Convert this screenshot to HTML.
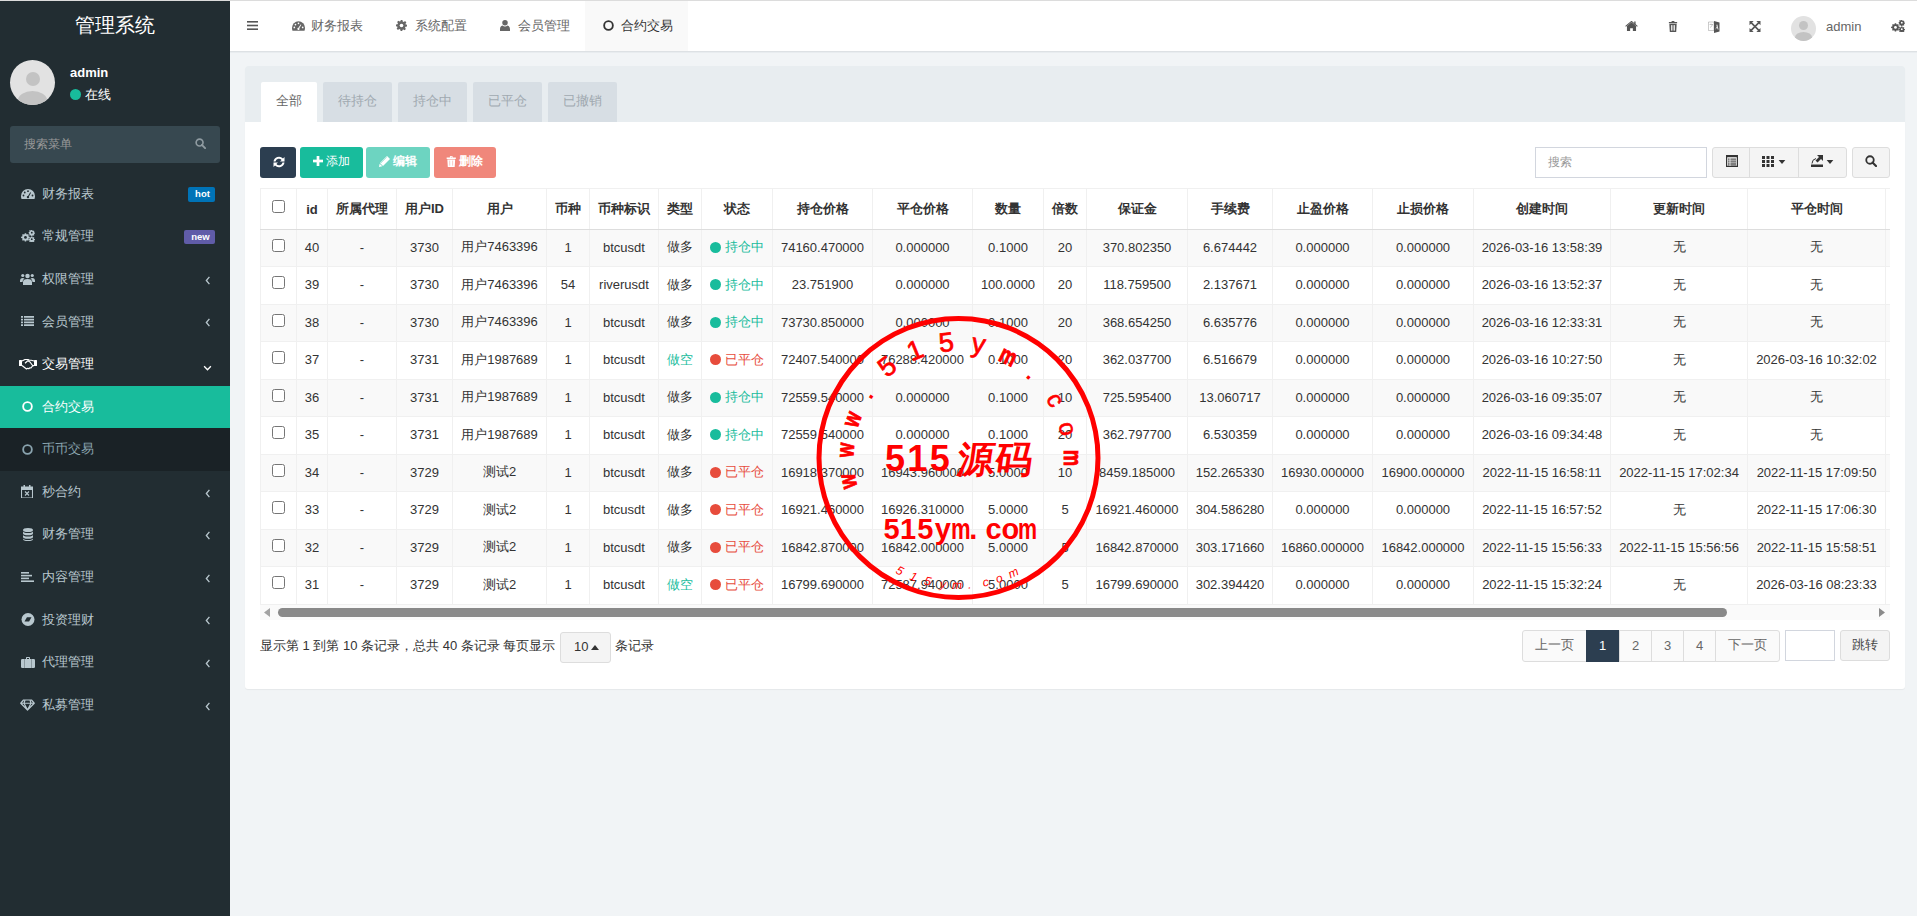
<!DOCTYPE html><html><head><meta charset="utf-8"><style>
*{box-sizing:border-box}
html,body{margin:0;padding:0;width:1917px;height:916px;overflow:hidden;background:#f1f4f6;font-family:"Liberation Sans",sans-serif;font-size:13px;color:#333;position:relative}
.a{position:absolute;white-space:nowrap}
.c{position:absolute;display:flex;align-items:center;justify-content:center;white-space:nowrap}
</style></head><body>
<div class="a" style="left:0;top:0;width:230px;height:916px;background:#222d32"></div>
<div class="a" style="left:0;top:0;width:1917px;height:1px;background:#dcdcdc;z-index:5"></div>
<div class="c" style="left:0;top:1px;width:230px;height:49px;color:#fff;font-size:20px">管理系统</div>
<div class="a" style="left:10px;top:60px;width:45px;height:45px;border-radius:50%;background:#e2e2e2;overflow:hidden"><div class="a" style="left:15.5px;top:11.5px;width:14px;height:14px;border-radius:50%;background:#c3c3c3"></div><div class="a" style="left:8px;top:31px;width:29px;height:18px;border-radius:50%;background:#c3c3c3"></div></div>
<div class="a" style="left:70px;top:65px;color:#fff;font-weight:bold;font-size:13px;line-height:16px">admin</div>
<div class="a" style="left:70px;top:89px;width:11px;height:11px;border-radius:50%;background:#18bc9c"></div>
<div class="a" style="left:85px;top:87px;color:#fff;font-size:13px;line-height:16px">在线</div>
<div class="a" style="left:10px;top:126px;width:210px;height:37px;background:#374850;border-radius:3px"></div>
<div class="a" style="left:24px;top:137px;color:#999;font-size:12px;line-height:14px">搜索菜单</div>
<svg style="position:absolute;left:195px;top:138px" width="11" height="11" viewBox="0 0 24 24" fill="#8f9ba1"><circle cx="10" cy="10" r="7.5" fill="none" stroke="#8f9ba1" stroke-width="3.6"/><path d="M15 15l7 7" stroke="#8f9ba1" stroke-width="4.2" stroke-linecap="round"/></svg>
<div class="a" style="left:42px;top:184.79px;line-height:18px;color:#b8c7ce">财务报表</div>
<svg style="position:absolute;left:21px;top:189px" width="14" height="10" viewBox="0 0 28 20" fill="#b8c7ce"><path d="M14 0A14 14 0 0 0 0 14q0 3 1 6h26q1-3 1-6A14 14 0 0 0 14 0z"/><circle cx="5" cy="13" r="1.8" fill="#222d32"/><circle cx="7.5" cy="7" r="1.8" fill="#222d32"/><circle cx="14" cy="4.3" r="1.8" fill="#222d32"/><circle cx="23" cy="13" r="1.8" fill="#222d32"/><path d="M18.5 6.5l1.6 1L15.8 15a2.3 2.3 0 1 1-1.8-1z" fill="#222d32"/></svg>
<div class="c" style="left:188px;top:187px;width:27px;height:15px;background:#0073b7;border-radius:2px;color:#fff;font-weight:bold;font-size:9.5px;padding:0 0 2px 2px">hot</div>
<div class="a" style="left:42px;top:227.36px;line-height:18px;color:#b8c7ce">常规管理</div>
<svg style="position:absolute;left:21px;top:230px" width="14" height="12" viewBox="0 0 30 26" fill="#b8c7ce"><path d="M8 7h3l.5 2 1.6.7 1.8-1.1 2 2-1.1 1.8.7 1.6 2 .5v3l-2 .5-.7 1.6 1.1 1.8-2 2-1.8-1.1-1.6.7L11 25H8l-.5-2-1.6-.7-1.8 1.1-2-2 1.1-1.8-.7-1.6L0 17.5v-3l2.5-.5.7-1.6-1.1-1.8 2-2 1.8 1.1L7.5 9z"/><circle cx="9.5" cy="16" r="3" fill="#222d32"/><path d="M22 0h2.4l.3 1.5 1.2.5 1.3-.9 1.7 1.7-.9 1.3.5 1.2 1.5.3v2.4l-1.5.3-.5 1.2.9 1.3-1.7 1.7-1.3-.9-1.2.5-.3 1.5H22l-.3-1.5-1.2-.5-1.3.9-1.7-1.7.9-1.3-.5-1.2L16.5 7V4.6l1.5-.3.5-1.2-.9-1.3 1.7-1.7 1.3.9 1.2-.5z"/><circle cx="23.2" cy="5.8" r="2" fill="#222d32"/><path d="M22 14h2.4l.3 1.5 1.2.5 1.3-.9 1.7 1.7-.9 1.3.5 1.2 1.5.3v2.4l-1.5.3-.5 1.2.9 1.3-1.7 1.7-1.3-.9-1.2.5-.3 1.5H22l-.3-1.5-1.2-.5-1.3.9-1.7-1.7.9-1.3-.5-1.2-1.5-.3v-2.4l1.5-.3.5-1.2-.9-1.3 1.7-1.7 1.3.9 1.2-.5z"/><circle cx="23.2" cy="19.8" r="2" fill="#222d32"/></svg>
<div class="c" style="left:184px;top:230px;width:31px;height:14px;background:#605ca8;border-radius:2px;color:#fff;font-weight:bold;font-size:9.5px;padding:0 0 1px 2px">new</div>
<div class="a" style="left:42px;top:269.93px;line-height:18px;color:#b8c7ce">权限管理</div>
<svg style="position:absolute;left:20px;top:273px" width="15" height="12" viewBox="0 0 30 24" fill="#b8c7ce"><circle cx="15" cy="6" r="4.5"/><circle cx="5.5" cy="5" r="3.2"/><circle cx="24.5" cy="5" r="3.2"/><path d="M6 24v-6q0-6 9-6t9 6v6z"/><path d="M0 16q0-6 5.5-6 2 0 3.5 1-4 2-4 7H0z"/><path d="M30 16q0-6-5.5-6-2 0-3.5 1 4 2 4 7h5z"/></svg>
<svg style="position:absolute;left:205px;top:276px" width="5.5" height="9" viewBox="0 0 10 16" fill="#b8c7ce"><path d="M8 1.5L2.5 8l5.5 6.5" fill="none" stroke="#b8c7ce" stroke-width="2.4"/></svg>
<div class="a" style="left:42px;top:312.50px;line-height:18px;color:#b8c7ce">会员管理</div>
<svg style="position:absolute;left:21px;top:316px" width="13" height="10" viewBox="0 0 26 20" fill="#b8c7ce"><rect x="0" y="0" width="4" height="3.5"/><rect x="6" y="0" width="20" height="3.5"/><rect x="0" y="5.5" width="4" height="3.5"/><rect x="6" y="5.5" width="20" height="3.5"/><rect x="0" y="11" width="4" height="3.5"/><rect x="6" y="11" width="20" height="3.5"/><rect x="0" y="16.5" width="4" height="3.5"/><rect x="6" y="16.5" width="20" height="3.5"/></svg>
<svg style="position:absolute;left:205px;top:318px" width="5.5" height="9" viewBox="0 0 10 16" fill="#b8c7ce"><path d="M8 1.5L2.5 8l5.5 6.5" fill="none" stroke="#b8c7ce" stroke-width="2.4"/></svg>
<div class="a" style="left:42px;top:355.07px;line-height:18px;color:#fff">交易管理</div>
<svg style="position:absolute;left:19px;top:358px" width="18" height="12" viewBox="0 0 36 24" fill="#fff"><rect x="0" y="4" width="6" height="12" rx="1"/><rect x="30" y="4" width="6" height="12" rx="1"/><path fill="none" stroke="#fff" stroke-width="2.4" stroke-linejoin="round" d="M6 6l6-3h6l3 1.5h3.5L30 6M6 15l9 7 2.5-1.5 2 1 2.5-2 2 .5 2.5-3.5L30 15M12 10.5l5.5-5 4.5 2.5 6 8"/></svg>
<svg style="position:absolute;left:203px;top:365px" width="9" height="6" viewBox="0 0 16 10" fill="#fff"><path d="M2 2l6 6 6-6" fill="none" stroke="#fff" stroke-width="2.4"/></svg>
<div class="a" style="left:0;top:385.86px;width:230px;height:42.57px;background:#18bc9c"></div>
<div class="a" style="left:42px;top:397.64px;line-height:18px;color:#fff">合约交易</div>
<svg style="position:absolute;left:22px;top:401px" width="11" height="11" viewBox="0 0 24 24" fill="#fff"><circle cx="12" cy="12" r="9.5" fill="none" stroke="#fff" stroke-width="4"/></svg>
<div class="a" style="left:0;top:428.43px;width:230px;height:42.57px;background:#1a2226"></div>
<div class="a" style="left:42px;top:440.21px;line-height:18px;color:#8aa4af">币币交易</div>
<svg style="position:absolute;left:22px;top:444px" width="11" height="11" viewBox="0 0 24 24" fill="#8aa4af"><circle cx="12" cy="12" r="9.5" fill="none" stroke="#8aa4af" stroke-width="4"/></svg>
<div class="a" style="left:42px;top:482.78px;line-height:18px;color:#b8c7ce">秒合约</div>
<svg style="position:absolute;left:21px;top:485px" width="12" height="13" viewBox="0 0 24 26" fill="#b8c7ce"><path d="M1 4h22v22H1z" fill="none" stroke="#b8c7ce" stroke-width="2.2"/><rect x="1" y="4" width="22" height="6"/><rect x="5" y="0" width="3" height="6"/><rect x="16" y="0" width="3" height="6"/><path d="M8 13l8 8M16 13l-8 8" stroke="#b8c7ce" stroke-width="2.2"/></svg>
<svg style="position:absolute;left:205px;top:489px" width="5.5" height="9" viewBox="0 0 10 16" fill="#b8c7ce"><path d="M8 1.5L2.5 8l5.5 6.5" fill="none" stroke="#b8c7ce" stroke-width="2.4"/></svg>
<div class="a" style="left:42px;top:525.35px;line-height:18px;color:#b8c7ce">财务管理</div>
<svg style="position:absolute;left:22px;top:528px" width="12" height="13" viewBox="0 0 20 26" fill="#b8c7ce"><ellipse cx="10" cy="4" rx="10" ry="4"/><path d="M0 6.5q0 3.5 10 3.5t10-3.5V11q0 3.5-10 3.5T0 11z"/><path d="M0 13.5q0 3.5 10 3.5t10-3.5V18q0 3.5-10 3.5T0 18z"/><path d="M0 20.5q0 3.5 10 3.5t10-3.5V22q0 4-10 4T0 22z"/></svg>
<svg style="position:absolute;left:205px;top:531px" width="5.5" height="9" viewBox="0 0 10 16" fill="#b8c7ce"><path d="M8 1.5L2.5 8l5.5 6.5" fill="none" stroke="#b8c7ce" stroke-width="2.4"/></svg>
<div class="a" style="left:42px;top:567.92px;line-height:18px;color:#b8c7ce">内容管理</div>
<svg style="position:absolute;left:21px;top:572px" width="13" height="10" viewBox="0 0 26 20" fill="#b8c7ce"><rect x="0" y="0" width="16" height="3.2"/><rect x="0" y="5.6" width="22" height="3.2"/><rect x="0" y="11.2" width="16" height="3.2"/><rect x="0" y="16.8" width="26" height="3.2"/></svg>
<svg style="position:absolute;left:205px;top:574px" width="5.5" height="9" viewBox="0 0 10 16" fill="#b8c7ce"><path d="M8 1.5L2.5 8l5.5 6.5" fill="none" stroke="#b8c7ce" stroke-width="2.4"/></svg>
<div class="a" style="left:42px;top:610.50px;line-height:18px;color:#b8c7ce">投资理财</div>
<svg style="position:absolute;left:21px;top:613px" width="14" height="13" viewBox="0 0 24 24" fill="#b8c7ce"><circle cx="12" cy="12" r="12"/><path d="M5.5 15.5L10 8h8.5L14 15.5z" fill="#222d32"/></svg>
<svg style="position:absolute;left:205px;top:616px" width="5.5" height="9" viewBox="0 0 10 16" fill="#b8c7ce"><path d="M8 1.5L2.5 8l5.5 6.5" fill="none" stroke="#b8c7ce" stroke-width="2.4"/></svg>
<div class="a" style="left:42px;top:653.07px;line-height:18px;color:#b8c7ce">代理管理</div>
<svg style="position:absolute;left:21px;top:657px" width="14" height="11" viewBox="0 0 28 22" fill="#b8c7ce"><path d="M10 4V1.5Q10 0 11.5 0h5Q18 0 18 1.5V4h-2V2h-4v2z"/><rect x="0" y="4" width="28" height="18" rx="2.5"/><rect x="6.5" y="4" width="1.2" height="18" fill="#222d32" opacity=".5"/><rect x="20.3" y="4" width="1.2" height="18" fill="#222d32" opacity=".5"/></svg>
<svg style="position:absolute;left:205px;top:659px" width="5.5" height="9" viewBox="0 0 10 16" fill="#b8c7ce"><path d="M8 1.5L2.5 8l5.5 6.5" fill="none" stroke="#b8c7ce" stroke-width="2.4"/></svg>
<div class="a" style="left:42px;top:695.64px;line-height:18px;color:#b8c7ce">私募管理</div>
<svg style="position:absolute;left:20px;top:699px" width="15" height="12" viewBox="0 0 30 23" fill="#b8c7ce"><path fill="none" stroke="#b8c7ce" stroke-width="2.4" stroke-linejoin="round" d="M7 1.5h16l5.5 6.5L15 21.5 1.5 8zM1.5 8h27M10 1.5L8 8l7 13.5L22 8l-2-6.5"/></svg>
<svg style="position:absolute;left:205px;top:702px" width="5.5" height="9" viewBox="0 0 10 16" fill="#b8c7ce"><path d="M8 1.5L2.5 8l5.5 6.5" fill="none" stroke="#b8c7ce" stroke-width="2.4"/></svg>
<div class="a" style="left:230px;top:1px;width:1687px;height:51px;background:#fff;border-bottom:1px solid #dde1e4"></div>
<div class="a" style="left:230px;top:52px;width:1687px;height:1px;background:#e8ecef"></div>
<svg style="position:absolute;left:247px;top:21px" width="11" height="9" viewBox="0 0 22 18" fill="#555"><rect x="0" y="0" width="22" height="3.2"/><rect x="0" y="7.4" width="22" height="3.2"/><rect x="0" y="14.8" width="22" height="3.2"/></svg>
<div class="a" style="left:585px;top:1px;width:103px;height:50px;background:#f9f9f9"></div>
<svg style="position:absolute;left:292px;top:21px" width="13" height="10" viewBox="0 0 28 20" fill="#666"><path d="M14 0A14 14 0 0 0 0 14q0 3 1 6h26q1-3 1-6A14 14 0 0 0 14 0z"/><circle cx="5" cy="13" r="1.8" fill="#fff"/><circle cx="7.5" cy="7" r="1.8" fill="#fff"/><circle cx="14" cy="4.3" r="1.8" fill="#fff"/><circle cx="23" cy="13" r="1.8" fill="#fff"/><path d="M18.5 6.5l1.6 1L15.8 15a2.3 2.3 0 1 1-1.8-1z" fill="#fff"/></svg>
<div class="a" style="left:311px;top:17px;line-height:18px;color:#666">财务报表</div>
<svg style="position:absolute;left:396px;top:20px" width="11" height="11" viewBox="0 0 24 24" fill="#666"><path d="M10 0h4l.7 3.3 2.3 1 2.8-1.9 2.8 2.8-1.9 2.8 1 2.3L24 10v4l-3.3.7-1 2.3 1.9 2.8-2.8 2.8-2.8-1.9-2.3 1L14 24h-4l-.7-3.3-2.3-1-2.8 1.9-2.8-2.8 1.9-2.8-1-2.3L0 14v-4l3.3-.7 1-2.3L2.4 4.2l2.8-2.8L8 3.3l2.3-1z"/><circle cx="12" cy="12" r="4" fill="#fff"/></svg>
<div class="a" style="left:415px;top:17px;line-height:18px;color:#666">系统配置</div>
<svg style="position:absolute;left:500px;top:20px" width="10" height="11" viewBox="0 0 20 22" fill="#666"><circle cx="10" cy="5.5" r="5.5"/><path d="M0 22v-4q0-6 5-7 2 2 5 2t5-2q5 1 5 7v4z"/></svg>
<div class="a" style="left:518px;top:17px;line-height:18px;color:#666">会员管理</div>
<svg style="position:absolute;left:603px;top:20px" width="11" height="11" viewBox="0 0 24 24" fill="#333"><circle cx="12" cy="12" r="9.5" fill="none" stroke="#333" stroke-width="4"/></svg>
<div class="a" style="left:621px;top:17px;line-height:18px;color:#333">合约交易</div>
<svg style="position:absolute;left:1625px;top:21px" width="13" height="10" viewBox="0 0 28 22" fill="#555"><path d="M14 3L4 11v11h7v-6h6v6h7V11z"/><path d="M1 12L14 1l13 11" fill="none" stroke="#555" stroke-width="2.4"/><rect x="20" y="1" width="3" height="7"/></svg>
<svg style="position:absolute;left:1668px;top:21px" width="10" height="11" viewBox="0 0 20 24" fill="#555"><path d="M7 2V0h6v2h6v3H1V2z"/><path d="M2 6h16l-1 18H3z"/><rect x="6" y="9" width="1.8" height="12" fill="#fff"/><rect x="9.1" y="9" width="1.8" height="12" fill="#fff"/><rect x="12.2" y="9" width="1.8" height="12" fill="#fff"/></svg>
<svg style="position:absolute;left:1708px;top:20px" width="12" height="13" viewBox="0 0 24 26" fill="#555"><path d="M1 4h11v17H1z" fill="none" stroke="#555" stroke-width="1.2" opacity=".5"/><path d="M12 2l11 3v18l-11 3z"/><path d="M15 19l2.5-10h1L21 19h-1.5l-.6-2.5h-2.8L15.5 19zM16.5 15h2l-1-4z" fill="#fff"/><path d="M3 9h7M6 7v2M4 15q4-2 5-6" fill="none" stroke="#555" stroke-width="1" opacity=".6"/></svg>
<svg style="position:absolute;left:1749px;top:21px" width="12" height="11" viewBox="0 0 24 24" fill="#555"><path d="M0 0h9L0 9zM24 0v9L15 0zM24 24h-9l9-9zM0 24v-9l9 9z"/><path d="M3 3l18 18M21 3L3 21" stroke="#555" stroke-width="3.6"/></svg>
<div class="a" style="left:1791px;top:16px;width:25px;height:25px;border-radius:50%;background:#e2e2e2;overflow:hidden"><div class="a" style="left:8px;top:5px;width:9px;height:9px;border-radius:50%;background:#c3c3c3"></div><div class="a" style="left:4px;top:16px;width:17px;height:11px;border-radius:50%;background:#c3c3c3"></div></div>
<div class="a" style="left:1826px;top:18px;line-height:18px;color:#666">admin</div>
<svg style="position:absolute;left:1891px;top:20px" width="14" height="12" viewBox="0 0 30 26" fill="#555"><path d="M8 7h3l.5 2 1.6.7 1.8-1.1 2 2-1.1 1.8.7 1.6 2 .5v3l-2 .5-.7 1.6 1.1 1.8-2 2-1.8-1.1-1.6.7L11 25H8l-.5-2-1.6-.7-1.8 1.1-2-2 1.1-1.8-.7-1.6L0 17.5v-3l2.5-.5.7-1.6-1.1-1.8 2-2 1.8 1.1L7.5 9z"/><circle cx="9.5" cy="16" r="3" fill="#fff"/><path d="M22 0h2.4l.3 1.5 1.2.5 1.3-.9 1.7 1.7-.9 1.3.5 1.2 1.5.3v2.4l-1.5.3-.5 1.2.9 1.3-1.7 1.7-1.3-.9-1.2.5-.3 1.5H22l-.3-1.5-1.2-.5-1.3.9-1.7-1.7.9-1.3-.5-1.2L16.5 7V4.6l1.5-.3.5-1.2-.9-1.3 1.7-1.7 1.3.9 1.2-.5z"/><circle cx="23.2" cy="5.8" r="2" fill="#fff"/><path d="M22 14h2.4l.3 1.5 1.2.5 1.3-.9 1.7 1.7-.9 1.3.5 1.2 1.5.3v2.4l-1.5.3-.5 1.2.9 1.3-1.7 1.7-1.3-.9-1.2.5-.3 1.5H22l-.3-1.5-1.2-.5-1.3.9-1.7-1.7.9-1.3-.5-1.2-1.5-.3v-2.4l1.5-.3.5-1.2-.9-1.3 1.7-1.7 1.3.9 1.2-.5z"/><circle cx="23.2" cy="19.8" r="2" fill="#fff"/></svg>
<div class="a" style="left:245px;top:66px;width:1660px;height:623px;background:#fff;border-radius:3px;box-shadow:0 1px 1px rgba(0,0,0,.05)"></div>
<div class="a" style="left:245px;top:66px;width:1660px;height:56px;background:#e8edf0;border-radius:3px 3px 0 0"></div>
<div class="c" style="left:261px;top:82px;width:56px;height:40px;padding-bottom:3px;background:#fff;border-radius:2px 2px 0 0;color:#666">全部</div>
<div class="c" style="left:323px;top:82px;width:69px;height:40px;padding-bottom:3px;background:#d7dee4;border-radius:2px 2px 0 0;color:#a0a9b0">待持仓</div>
<div class="c" style="left:398px;top:82px;width:69px;height:40px;padding-bottom:3px;background:#d7dee4;border-radius:2px 2px 0 0;color:#a0a9b0">持仓中</div>
<div class="c" style="left:473px;top:82px;width:69px;height:40px;padding-bottom:3px;background:#d7dee4;border-radius:2px 2px 0 0;color:#a0a9b0">已平仓</div>
<div class="c" style="left:548px;top:82px;width:69px;height:40px;padding-bottom:3px;background:#d7dee4;border-radius:2px 2px 0 0;color:#a0a9b0">已撤销</div>
<div class="c" style="left:260px;top:147px;width:36px;height:31px;background:#2c3e50;border-radius:3px"></div>
<svg style="position:absolute;left:272.5px;top:155.5px" width="12" height="12" viewBox="0 0 24 24" fill="#fff"><path d="M1 11A11 11 0 0 1 20 5L23 2V11H14L17.2 7.8A7 7 0 0 0 5 11Z"/><path d="M23 13A11 11 0 0 1 4 19L1 22V13H10L6.8 16.2A7 7 0 0 0 19 13Z"/></svg>
<div class="a" style="left:300px;top:147px;width:63px;height:31px;background:#18bc9c;border-radius:3px"></div>
<svg style="position:absolute;left:313px;top:156px" width="10" height="10" viewBox="0 0 20 20" fill="#fff"><rect x="7.3" y="0" width="5.4" height="20"/><rect x="0" y="7.3" width="20" height="5.4"/></svg>
<div class="a" style="left:326px;top:153px;line-height:16px;color:#fff;font-size:12px">添加</div>
<div class="a" style="left:366px;top:147px;width:64px;height:31px;background:#6dd4c1;border-radius:3px"></div>
<svg style="position:absolute;left:379px;top:156px" width="11" height="11" viewBox="0 0 22 22" fill="#fff"><path d="M16 0l6 6L8 20 2 14z"/><path d="M1.3 15.3l5.4 5.4L0 22z"/><path d="M3.5 14.5l12-12" stroke="#6dd4c1" stroke-width="1"/></svg>
<div class="a" style="left:393px;top:153px;line-height:16px;color:#fff;font-size:12px;font-weight:bold">编辑</div>
<div class="a" style="left:434px;top:147px;width:62px;height:31px;background:#f0877b;border-radius:3px"></div>
<svg style="position:absolute;left:446px;top:156px" width="10.5" height="11" viewBox="0 0 22 24" fill="#fff"><path d="M8 1q0-1 1-1h4q1 0 1 1v2h7v3.5H1V3h7zM10 1.5V3h2V1.5z"/><path d="M2.5 7.5h17L18.5 24h-15z"/><rect x="7" y="10" width="1.6" height="11" fill="#f0877b" opacity=".6"/><rect x="13.4" y="10" width="1.6" height="11" fill="#f0877b" opacity=".6"/></svg>
<div class="a" style="left:459px;top:153px;line-height:16px;color:#fff;font-size:12px;font-weight:bold">删除</div>
<div class="a" style="left:1535px;top:147px;width:172px;height:31px;border:1px solid #d2d6de;background:#fff"></div>
<div class="a" style="left:1548px;top:154px;line-height:16px;color:#999;font-size:12px">搜索</div>
<div class="a" style="left:1712px;top:147px;width:135px;height:31px;border:1px solid #ddd;background:#f4f4f4;border-radius:3px"></div>
<div class="a" style="left:1749px;top:148px;width:1px;height:29px;background:#ddd"></div>
<div class="a" style="left:1798px;top:148px;width:1px;height:29px;background:#ddd"></div>
<svg style="position:absolute;left:1726px;top:155px" width="12" height="12" viewBox="0 0 12 12" fill="#333"><path d="M.6 .6h10.8v10.8H.6z" fill="none" stroke="#333" stroke-width="1.2"/><rect x="0" y="0" width="12" height="2.2"/><rect x="2" y="3.6" width="8" height="1"/><rect x="2" y="5.6" width="8" height="1"/><rect x="2" y="7.6" width="8" height="1"/><rect x="2" y="9.4" width="8" height="1"/><rect x="3.6" y="3" width="0.8" height="8" fill="#f4f4f4"/></svg>
<svg style="position:absolute;left:1762px;top:156px" width="12" height="11" viewBox="0 0 12 11" fill="#333"><rect x="0" y="0" width="3" height="3"/><rect x="4.5" y="0" width="3" height="3"/><rect x="9" y="0" width="3" height="3"/><rect x="0" y="4" width="3" height="3"/><rect x="4.5" y="4" width="3" height="3"/><rect x="9" y="4" width="3" height="3"/><rect x="0" y="8" width="3" height="3"/><rect x="4.5" y="8" width="3" height="3"/><rect x="9" y="8" width="3" height="3"/></svg>
<svg style="position:absolute;left:1778px;top:160px" width="8" height="4" viewBox="0 0 10 6" fill="#333"><path d="M0 0h10L5 6z"/></svg>
<svg style="position:absolute;left:1811px;top:155px" width="12" height="12" viewBox="0 0 24 24" fill="#333"><rect x="0" y="19" width="24" height="5"/><path d="M12 0h12v12l-4-4-7 7-4-4 7-7z"/><path d="M2 17q0-8 8-10" fill="none" stroke="#333" stroke-width="2"/></svg>
<svg style="position:absolute;left:1826px;top:160px" width="8" height="4" viewBox="0 0 10 6" fill="#333"><path d="M0 0h10L5 6z"/></svg>
<div class="a" style="left:1852px;top:147px;width:38px;height:31px;border:1px solid #ddd;background:#f4f4f4;border-radius:3px"></div>
<svg style="position:absolute;left:1865px;top:155px" width="12" height="12" viewBox="0 0 24 24" fill="#333"><circle cx="10" cy="10" r="7.5" fill="none" stroke="#333" stroke-width="3.6"/><path d="M15 15l7 7" stroke="#333" stroke-width="4.2" stroke-linecap="round"/></svg>
<div class="a" style="left:260px;top:188px;width:1630px;height:432px;overflow:hidden">
<div class="a" style="left:0;top:0;width:1700px;height:41px;background:#fff;border-top:1px solid #f0f0f0"></div>
<div class="c" style="left:0px;top:1px;width:36px;height:40px;border-left:1px solid #f0f0f0;font-weight:bold"></div>
<div class="c" style="left:36px;top:1px;width:31px;height:40px;border-left:1px solid #f0f0f0;font-weight:bold">id</div>
<div class="c" style="left:67px;top:1px;width:69px;height:40px;border-left:1px solid #f0f0f0;font-weight:bold">所属代理</div>
<div class="c" style="left:136px;top:1px;width:56px;height:40px;border-left:1px solid #f0f0f0;font-weight:bold">用户ID</div>
<div class="c" style="left:192px;top:1px;width:94px;height:40px;border-left:1px solid #f0f0f0;font-weight:bold">用户</div>
<div class="c" style="left:286px;top:1px;width:43px;height:40px;border-left:1px solid #f0f0f0;font-weight:bold">币种</div>
<div class="c" style="left:329px;top:1px;width:69px;height:40px;border-left:1px solid #f0f0f0;font-weight:bold">币种标识</div>
<div class="c" style="left:398px;top:1px;width:43px;height:40px;border-left:1px solid #f0f0f0;font-weight:bold">类型</div>
<div class="c" style="left:441px;top:1px;width:71px;height:40px;border-left:1px solid #f0f0f0;font-weight:bold">状态</div>
<div class="c" style="left:512px;top:1px;width:100px;height:40px;border-left:1px solid #f0f0f0;font-weight:bold">持仓价格</div>
<div class="c" style="left:612px;top:1px;width:100px;height:40px;border-left:1px solid #f0f0f0;font-weight:bold">平仓价格</div>
<div class="c" style="left:712px;top:1px;width:71px;height:40px;border-left:1px solid #f0f0f0;font-weight:bold">数量</div>
<div class="c" style="left:783px;top:1px;width:43px;height:40px;border-left:1px solid #f0f0f0;font-weight:bold">倍数</div>
<div class="c" style="left:826px;top:1px;width:101px;height:40px;border-left:1px solid #f0f0f0;font-weight:bold">保证金</div>
<div class="c" style="left:927px;top:1px;width:85px;height:40px;border-left:1px solid #f0f0f0;font-weight:bold">手续费</div>
<div class="c" style="left:1012px;top:1px;width:100px;height:40px;border-left:1px solid #f0f0f0;font-weight:bold">止盈价格</div>
<div class="c" style="left:1112px;top:1px;width:101px;height:40px;border-left:1px solid #f0f0f0;font-weight:bold">止损价格</div>
<div class="c" style="left:1213px;top:1px;width:137px;height:40px;border-left:1px solid #f0f0f0;font-weight:bold">创建时间</div>
<div class="c" style="left:1350px;top:1px;width:137px;height:40px;border-left:1px solid #f0f0f0;font-weight:bold">更新时间</div>
<div class="c" style="left:1487px;top:1px;width:138px;height:40px;border-left:1px solid #f0f0f0;font-weight:bold">平仓时间</div>
<div class="c" style="left:1625px;top:1px;width:115px;height:40px;border-left:1px solid #f0f0f0;font-weight:bold"></div>
<div class="a" style="left:12px;top:12px;width:13px;height:13px;border:1px solid #767676;border-radius:2.5px;background:#fff"></div>
<div class="a" style="left:0;top:41px;width:1700px;height:1px;background:#dddddd"></div>
<div class="a" style="left:0;top:42px;width:1700px;height:37px;background:#f9f9f9;border-top:0px"></div>
<div class="a" style="left:0px;top:42px;width:1px;height:37px;background:#f0f0f0"></div>
<div class="a" style="left:36px;top:42px;width:1px;height:37px;background:#f0f0f0"></div>
<div class="a" style="left:67px;top:42px;width:1px;height:37px;background:#f0f0f0"></div>
<div class="a" style="left:136px;top:42px;width:1px;height:37px;background:#f0f0f0"></div>
<div class="a" style="left:192px;top:42px;width:1px;height:37px;background:#f0f0f0"></div>
<div class="a" style="left:286px;top:42px;width:1px;height:37px;background:#f0f0f0"></div>
<div class="a" style="left:329px;top:42px;width:1px;height:37px;background:#f0f0f0"></div>
<div class="a" style="left:398px;top:42px;width:1px;height:37px;background:#f0f0f0"></div>
<div class="a" style="left:441px;top:42px;width:1px;height:37px;background:#f0f0f0"></div>
<div class="a" style="left:512px;top:42px;width:1px;height:37px;background:#f0f0f0"></div>
<div class="a" style="left:612px;top:42px;width:1px;height:37px;background:#f0f0f0"></div>
<div class="a" style="left:712px;top:42px;width:1px;height:37px;background:#f0f0f0"></div>
<div class="a" style="left:783px;top:42px;width:1px;height:37px;background:#f0f0f0"></div>
<div class="a" style="left:826px;top:42px;width:1px;height:37px;background:#f0f0f0"></div>
<div class="a" style="left:927px;top:42px;width:1px;height:37px;background:#f0f0f0"></div>
<div class="a" style="left:1012px;top:42px;width:1px;height:37px;background:#f0f0f0"></div>
<div class="a" style="left:1112px;top:42px;width:1px;height:37px;background:#f0f0f0"></div>
<div class="a" style="left:1213px;top:42px;width:1px;height:37px;background:#f0f0f0"></div>
<div class="a" style="left:1350px;top:42px;width:1px;height:37px;background:#f0f0f0"></div>
<div class="a" style="left:1487px;top:42px;width:1px;height:37px;background:#f0f0f0"></div>
<div class="a" style="left:1625px;top:42px;width:1px;height:37px;background:#f0f0f0"></div>
<div class="a" style="left:12px;top:51px;width:13px;height:13px;border:1px solid #767676;border-radius:2.5px;background:#fff"></div>
<div class="c" style="left:37px;top:42px;width:30px;height:36px;padding-bottom:2px;">40</div>
<div class="c" style="left:68px;top:42px;width:68px;height:36px;padding-bottom:2px;">-</div>
<div class="c" style="left:137px;top:42px;width:55px;height:36px;padding-bottom:2px;">3730</div>
<div class="c" style="left:193px;top:42px;width:93px;height:36px;padding-bottom:2px;">用户7463396</div>
<div class="c" style="left:287px;top:42px;width:42px;height:36px;padding-bottom:2px;">1</div>
<div class="c" style="left:330px;top:42px;width:68px;height:36px;padding-bottom:2px;">btcusdt</div>
<div class="c" style="left:399px;top:42px;width:42px;height:36px;padding-bottom:2px;">做多</div>
<div class="c" style="left:442px;top:42px;width:70px;height:36px;padding-bottom:2px;"><span style="display:inline-block;width:11px;height:11px;border-radius:50%;background:#18bc9c;margin-right:4px;vertical-align:-1px"></span><span style="color:#18bc9c">持仓中</span></div>
<div class="c" style="left:513px;top:42px;width:99px;height:36px;padding-bottom:2px;">74160.470000</div>
<div class="c" style="left:613px;top:42px;width:99px;height:36px;padding-bottom:2px;">0.000000</div>
<div class="c" style="left:713px;top:42px;width:70px;height:36px;padding-bottom:2px;">0.1000</div>
<div class="c" style="left:784px;top:42px;width:42px;height:36px;padding-bottom:2px;">20</div>
<div class="c" style="left:827px;top:42px;width:100px;height:36px;padding-bottom:2px;">370.802350</div>
<div class="c" style="left:928px;top:42px;width:84px;height:36px;padding-bottom:2px;">6.674442</div>
<div class="c" style="left:1013px;top:42px;width:99px;height:36px;padding-bottom:2px;">0.000000</div>
<div class="c" style="left:1113px;top:42px;width:100px;height:36px;padding-bottom:2px;">0.000000</div>
<div class="c" style="left:1214px;top:42px;width:136px;height:36px;padding-bottom:2px;">2026-03-16 13:58:39</div>
<div class="c" style="left:1351px;top:42px;width:136px;height:36px;padding-bottom:2px;">无</div>
<div class="c" style="left:1488px;top:42px;width:137px;height:36px;padding-bottom:2px;">无</div>
<div class="a" style="left:0;top:79px;width:1700px;height:38px;background:#fff;border-top:0px"></div>
<div class="a" style="left:0;top:78px;width:1700px;height:1px;background:#f0f0f0"></div>
<div class="a" style="left:0px;top:79px;width:1px;height:38px;background:#f0f0f0"></div>
<div class="a" style="left:36px;top:79px;width:1px;height:38px;background:#f0f0f0"></div>
<div class="a" style="left:67px;top:79px;width:1px;height:38px;background:#f0f0f0"></div>
<div class="a" style="left:136px;top:79px;width:1px;height:38px;background:#f0f0f0"></div>
<div class="a" style="left:192px;top:79px;width:1px;height:38px;background:#f0f0f0"></div>
<div class="a" style="left:286px;top:79px;width:1px;height:38px;background:#f0f0f0"></div>
<div class="a" style="left:329px;top:79px;width:1px;height:38px;background:#f0f0f0"></div>
<div class="a" style="left:398px;top:79px;width:1px;height:38px;background:#f0f0f0"></div>
<div class="a" style="left:441px;top:79px;width:1px;height:38px;background:#f0f0f0"></div>
<div class="a" style="left:512px;top:79px;width:1px;height:38px;background:#f0f0f0"></div>
<div class="a" style="left:612px;top:79px;width:1px;height:38px;background:#f0f0f0"></div>
<div class="a" style="left:712px;top:79px;width:1px;height:38px;background:#f0f0f0"></div>
<div class="a" style="left:783px;top:79px;width:1px;height:38px;background:#f0f0f0"></div>
<div class="a" style="left:826px;top:79px;width:1px;height:38px;background:#f0f0f0"></div>
<div class="a" style="left:927px;top:79px;width:1px;height:38px;background:#f0f0f0"></div>
<div class="a" style="left:1012px;top:79px;width:1px;height:38px;background:#f0f0f0"></div>
<div class="a" style="left:1112px;top:79px;width:1px;height:38px;background:#f0f0f0"></div>
<div class="a" style="left:1213px;top:79px;width:1px;height:38px;background:#f0f0f0"></div>
<div class="a" style="left:1350px;top:79px;width:1px;height:38px;background:#f0f0f0"></div>
<div class="a" style="left:1487px;top:79px;width:1px;height:38px;background:#f0f0f0"></div>
<div class="a" style="left:1625px;top:79px;width:1px;height:38px;background:#f0f0f0"></div>
<div class="a" style="left:12px;top:88px;width:13px;height:13px;border:1px solid #767676;border-radius:2.5px;background:#fff"></div>
<div class="c" style="left:37px;top:79px;width:30px;height:37px;padding-bottom:2px;">39</div>
<div class="c" style="left:68px;top:79px;width:68px;height:37px;padding-bottom:2px;">-</div>
<div class="c" style="left:137px;top:79px;width:55px;height:37px;padding-bottom:2px;">3730</div>
<div class="c" style="left:193px;top:79px;width:93px;height:37px;padding-bottom:2px;">用户7463396</div>
<div class="c" style="left:287px;top:79px;width:42px;height:37px;padding-bottom:2px;">54</div>
<div class="c" style="left:330px;top:79px;width:68px;height:37px;padding-bottom:2px;">riverusdt</div>
<div class="c" style="left:399px;top:79px;width:42px;height:37px;padding-bottom:2px;">做多</div>
<div class="c" style="left:442px;top:79px;width:70px;height:37px;padding-bottom:2px;"><span style="display:inline-block;width:11px;height:11px;border-radius:50%;background:#18bc9c;margin-right:4px;vertical-align:-1px"></span><span style="color:#18bc9c">持仓中</span></div>
<div class="c" style="left:513px;top:79px;width:99px;height:37px;padding-bottom:2px;">23.751900</div>
<div class="c" style="left:613px;top:79px;width:99px;height:37px;padding-bottom:2px;">0.000000</div>
<div class="c" style="left:713px;top:79px;width:70px;height:37px;padding-bottom:2px;">100.0000</div>
<div class="c" style="left:784px;top:79px;width:42px;height:37px;padding-bottom:2px;">20</div>
<div class="c" style="left:827px;top:79px;width:100px;height:37px;padding-bottom:2px;">118.759500</div>
<div class="c" style="left:928px;top:79px;width:84px;height:37px;padding-bottom:2px;">2.137671</div>
<div class="c" style="left:1013px;top:79px;width:99px;height:37px;padding-bottom:2px;">0.000000</div>
<div class="c" style="left:1113px;top:79px;width:100px;height:37px;padding-bottom:2px;">0.000000</div>
<div class="c" style="left:1214px;top:79px;width:136px;height:37px;padding-bottom:2px;">2026-03-16 13:52:37</div>
<div class="c" style="left:1351px;top:79px;width:136px;height:37px;padding-bottom:2px;">无</div>
<div class="c" style="left:1488px;top:79px;width:137px;height:37px;padding-bottom:2px;">无</div>
<div class="a" style="left:0;top:117px;width:1700px;height:37px;background:#f9f9f9;border-top:0px"></div>
<div class="a" style="left:0;top:116px;width:1700px;height:1px;background:#f0f0f0"></div>
<div class="a" style="left:0px;top:117px;width:1px;height:37px;background:#f0f0f0"></div>
<div class="a" style="left:36px;top:117px;width:1px;height:37px;background:#f0f0f0"></div>
<div class="a" style="left:67px;top:117px;width:1px;height:37px;background:#f0f0f0"></div>
<div class="a" style="left:136px;top:117px;width:1px;height:37px;background:#f0f0f0"></div>
<div class="a" style="left:192px;top:117px;width:1px;height:37px;background:#f0f0f0"></div>
<div class="a" style="left:286px;top:117px;width:1px;height:37px;background:#f0f0f0"></div>
<div class="a" style="left:329px;top:117px;width:1px;height:37px;background:#f0f0f0"></div>
<div class="a" style="left:398px;top:117px;width:1px;height:37px;background:#f0f0f0"></div>
<div class="a" style="left:441px;top:117px;width:1px;height:37px;background:#f0f0f0"></div>
<div class="a" style="left:512px;top:117px;width:1px;height:37px;background:#f0f0f0"></div>
<div class="a" style="left:612px;top:117px;width:1px;height:37px;background:#f0f0f0"></div>
<div class="a" style="left:712px;top:117px;width:1px;height:37px;background:#f0f0f0"></div>
<div class="a" style="left:783px;top:117px;width:1px;height:37px;background:#f0f0f0"></div>
<div class="a" style="left:826px;top:117px;width:1px;height:37px;background:#f0f0f0"></div>
<div class="a" style="left:927px;top:117px;width:1px;height:37px;background:#f0f0f0"></div>
<div class="a" style="left:1012px;top:117px;width:1px;height:37px;background:#f0f0f0"></div>
<div class="a" style="left:1112px;top:117px;width:1px;height:37px;background:#f0f0f0"></div>
<div class="a" style="left:1213px;top:117px;width:1px;height:37px;background:#f0f0f0"></div>
<div class="a" style="left:1350px;top:117px;width:1px;height:37px;background:#f0f0f0"></div>
<div class="a" style="left:1487px;top:117px;width:1px;height:37px;background:#f0f0f0"></div>
<div class="a" style="left:1625px;top:117px;width:1px;height:37px;background:#f0f0f0"></div>
<div class="a" style="left:12px;top:126px;width:13px;height:13px;border:1px solid #767676;border-radius:2.5px;background:#fff"></div>
<div class="c" style="left:37px;top:117px;width:30px;height:36px;padding-bottom:2px;">38</div>
<div class="c" style="left:68px;top:117px;width:68px;height:36px;padding-bottom:2px;">-</div>
<div class="c" style="left:137px;top:117px;width:55px;height:36px;padding-bottom:2px;">3730</div>
<div class="c" style="left:193px;top:117px;width:93px;height:36px;padding-bottom:2px;">用户7463396</div>
<div class="c" style="left:287px;top:117px;width:42px;height:36px;padding-bottom:2px;">1</div>
<div class="c" style="left:330px;top:117px;width:68px;height:36px;padding-bottom:2px;">btcusdt</div>
<div class="c" style="left:399px;top:117px;width:42px;height:36px;padding-bottom:2px;">做多</div>
<div class="c" style="left:442px;top:117px;width:70px;height:36px;padding-bottom:2px;"><span style="display:inline-block;width:11px;height:11px;border-radius:50%;background:#18bc9c;margin-right:4px;vertical-align:-1px"></span><span style="color:#18bc9c">持仓中</span></div>
<div class="c" style="left:513px;top:117px;width:99px;height:36px;padding-bottom:2px;">73730.850000</div>
<div class="c" style="left:613px;top:117px;width:99px;height:36px;padding-bottom:2px;">0.000000</div>
<div class="c" style="left:713px;top:117px;width:70px;height:36px;padding-bottom:2px;">0.1000</div>
<div class="c" style="left:784px;top:117px;width:42px;height:36px;padding-bottom:2px;">20</div>
<div class="c" style="left:827px;top:117px;width:100px;height:36px;padding-bottom:2px;">368.654250</div>
<div class="c" style="left:928px;top:117px;width:84px;height:36px;padding-bottom:2px;">6.635776</div>
<div class="c" style="left:1013px;top:117px;width:99px;height:36px;padding-bottom:2px;">0.000000</div>
<div class="c" style="left:1113px;top:117px;width:100px;height:36px;padding-bottom:2px;">0.000000</div>
<div class="c" style="left:1214px;top:117px;width:136px;height:36px;padding-bottom:2px;">2026-03-16 12:33:31</div>
<div class="c" style="left:1351px;top:117px;width:136px;height:36px;padding-bottom:2px;">无</div>
<div class="c" style="left:1488px;top:117px;width:137px;height:36px;padding-bottom:2px;">无</div>
<div class="a" style="left:0;top:154px;width:1700px;height:38px;background:#fff;border-top:0px"></div>
<div class="a" style="left:0;top:153px;width:1700px;height:1px;background:#f0f0f0"></div>
<div class="a" style="left:0px;top:154px;width:1px;height:38px;background:#f0f0f0"></div>
<div class="a" style="left:36px;top:154px;width:1px;height:38px;background:#f0f0f0"></div>
<div class="a" style="left:67px;top:154px;width:1px;height:38px;background:#f0f0f0"></div>
<div class="a" style="left:136px;top:154px;width:1px;height:38px;background:#f0f0f0"></div>
<div class="a" style="left:192px;top:154px;width:1px;height:38px;background:#f0f0f0"></div>
<div class="a" style="left:286px;top:154px;width:1px;height:38px;background:#f0f0f0"></div>
<div class="a" style="left:329px;top:154px;width:1px;height:38px;background:#f0f0f0"></div>
<div class="a" style="left:398px;top:154px;width:1px;height:38px;background:#f0f0f0"></div>
<div class="a" style="left:441px;top:154px;width:1px;height:38px;background:#f0f0f0"></div>
<div class="a" style="left:512px;top:154px;width:1px;height:38px;background:#f0f0f0"></div>
<div class="a" style="left:612px;top:154px;width:1px;height:38px;background:#f0f0f0"></div>
<div class="a" style="left:712px;top:154px;width:1px;height:38px;background:#f0f0f0"></div>
<div class="a" style="left:783px;top:154px;width:1px;height:38px;background:#f0f0f0"></div>
<div class="a" style="left:826px;top:154px;width:1px;height:38px;background:#f0f0f0"></div>
<div class="a" style="left:927px;top:154px;width:1px;height:38px;background:#f0f0f0"></div>
<div class="a" style="left:1012px;top:154px;width:1px;height:38px;background:#f0f0f0"></div>
<div class="a" style="left:1112px;top:154px;width:1px;height:38px;background:#f0f0f0"></div>
<div class="a" style="left:1213px;top:154px;width:1px;height:38px;background:#f0f0f0"></div>
<div class="a" style="left:1350px;top:154px;width:1px;height:38px;background:#f0f0f0"></div>
<div class="a" style="left:1487px;top:154px;width:1px;height:38px;background:#f0f0f0"></div>
<div class="a" style="left:1625px;top:154px;width:1px;height:38px;background:#f0f0f0"></div>
<div class="a" style="left:12px;top:163px;width:13px;height:13px;border:1px solid #767676;border-radius:2.5px;background:#fff"></div>
<div class="c" style="left:37px;top:154px;width:30px;height:37px;padding-bottom:2px;">37</div>
<div class="c" style="left:68px;top:154px;width:68px;height:37px;padding-bottom:2px;">-</div>
<div class="c" style="left:137px;top:154px;width:55px;height:37px;padding-bottom:2px;">3731</div>
<div class="c" style="left:193px;top:154px;width:93px;height:37px;padding-bottom:2px;">用户1987689</div>
<div class="c" style="left:287px;top:154px;width:42px;height:37px;padding-bottom:2px;">1</div>
<div class="c" style="left:330px;top:154px;width:68px;height:37px;padding-bottom:2px;">btcusdt</div>
<div class="c" style="left:399px;top:154px;width:42px;height:37px;padding-bottom:2px;color:#18bc9c">做空</div>
<div class="c" style="left:442px;top:154px;width:70px;height:37px;padding-bottom:2px;"><span style="display:inline-block;width:11px;height:11px;border-radius:50%;background:#e74c3c;margin-right:4px;vertical-align:-1px"></span><span style="color:#e74c3c">已平仓</span></div>
<div class="c" style="left:513px;top:154px;width:99px;height:37px;padding-bottom:2px;">72407.540000</div>
<div class="c" style="left:613px;top:154px;width:99px;height:37px;padding-bottom:2px;">76288.420000</div>
<div class="c" style="left:713px;top:154px;width:70px;height:37px;padding-bottom:2px;">0.1000</div>
<div class="c" style="left:784px;top:154px;width:42px;height:37px;padding-bottom:2px;">20</div>
<div class="c" style="left:827px;top:154px;width:100px;height:37px;padding-bottom:2px;">362.037700</div>
<div class="c" style="left:928px;top:154px;width:84px;height:37px;padding-bottom:2px;">6.516679</div>
<div class="c" style="left:1013px;top:154px;width:99px;height:37px;padding-bottom:2px;">0.000000</div>
<div class="c" style="left:1113px;top:154px;width:100px;height:37px;padding-bottom:2px;">0.000000</div>
<div class="c" style="left:1214px;top:154px;width:136px;height:37px;padding-bottom:2px;">2026-03-16 10:27:50</div>
<div class="c" style="left:1351px;top:154px;width:136px;height:37px;padding-bottom:2px;">无</div>
<div class="c" style="left:1488px;top:154px;width:137px;height:37px;padding-bottom:2px;">2026-03-16 10:32:02</div>
<div class="a" style="left:0;top:192px;width:1700px;height:37px;background:#f9f9f9;border-top:0px"></div>
<div class="a" style="left:0;top:191px;width:1700px;height:1px;background:#f0f0f0"></div>
<div class="a" style="left:0px;top:192px;width:1px;height:37px;background:#f0f0f0"></div>
<div class="a" style="left:36px;top:192px;width:1px;height:37px;background:#f0f0f0"></div>
<div class="a" style="left:67px;top:192px;width:1px;height:37px;background:#f0f0f0"></div>
<div class="a" style="left:136px;top:192px;width:1px;height:37px;background:#f0f0f0"></div>
<div class="a" style="left:192px;top:192px;width:1px;height:37px;background:#f0f0f0"></div>
<div class="a" style="left:286px;top:192px;width:1px;height:37px;background:#f0f0f0"></div>
<div class="a" style="left:329px;top:192px;width:1px;height:37px;background:#f0f0f0"></div>
<div class="a" style="left:398px;top:192px;width:1px;height:37px;background:#f0f0f0"></div>
<div class="a" style="left:441px;top:192px;width:1px;height:37px;background:#f0f0f0"></div>
<div class="a" style="left:512px;top:192px;width:1px;height:37px;background:#f0f0f0"></div>
<div class="a" style="left:612px;top:192px;width:1px;height:37px;background:#f0f0f0"></div>
<div class="a" style="left:712px;top:192px;width:1px;height:37px;background:#f0f0f0"></div>
<div class="a" style="left:783px;top:192px;width:1px;height:37px;background:#f0f0f0"></div>
<div class="a" style="left:826px;top:192px;width:1px;height:37px;background:#f0f0f0"></div>
<div class="a" style="left:927px;top:192px;width:1px;height:37px;background:#f0f0f0"></div>
<div class="a" style="left:1012px;top:192px;width:1px;height:37px;background:#f0f0f0"></div>
<div class="a" style="left:1112px;top:192px;width:1px;height:37px;background:#f0f0f0"></div>
<div class="a" style="left:1213px;top:192px;width:1px;height:37px;background:#f0f0f0"></div>
<div class="a" style="left:1350px;top:192px;width:1px;height:37px;background:#f0f0f0"></div>
<div class="a" style="left:1487px;top:192px;width:1px;height:37px;background:#f0f0f0"></div>
<div class="a" style="left:1625px;top:192px;width:1px;height:37px;background:#f0f0f0"></div>
<div class="a" style="left:12px;top:201px;width:13px;height:13px;border:1px solid #767676;border-radius:2.5px;background:#fff"></div>
<div class="c" style="left:37px;top:192px;width:30px;height:36px;padding-bottom:2px;">36</div>
<div class="c" style="left:68px;top:192px;width:68px;height:36px;padding-bottom:2px;">-</div>
<div class="c" style="left:137px;top:192px;width:55px;height:36px;padding-bottom:2px;">3731</div>
<div class="c" style="left:193px;top:192px;width:93px;height:36px;padding-bottom:2px;">用户1987689</div>
<div class="c" style="left:287px;top:192px;width:42px;height:36px;padding-bottom:2px;">1</div>
<div class="c" style="left:330px;top:192px;width:68px;height:36px;padding-bottom:2px;">btcusdt</div>
<div class="c" style="left:399px;top:192px;width:42px;height:36px;padding-bottom:2px;">做多</div>
<div class="c" style="left:442px;top:192px;width:70px;height:36px;padding-bottom:2px;"><span style="display:inline-block;width:11px;height:11px;border-radius:50%;background:#18bc9c;margin-right:4px;vertical-align:-1px"></span><span style="color:#18bc9c">持仓中</span></div>
<div class="c" style="left:513px;top:192px;width:99px;height:36px;padding-bottom:2px;">72559.540000</div>
<div class="c" style="left:613px;top:192px;width:99px;height:36px;padding-bottom:2px;">0.000000</div>
<div class="c" style="left:713px;top:192px;width:70px;height:36px;padding-bottom:2px;">0.1000</div>
<div class="c" style="left:784px;top:192px;width:42px;height:36px;padding-bottom:2px;">10</div>
<div class="c" style="left:827px;top:192px;width:100px;height:36px;padding-bottom:2px;">725.595400</div>
<div class="c" style="left:928px;top:192px;width:84px;height:36px;padding-bottom:2px;">13.060717</div>
<div class="c" style="left:1013px;top:192px;width:99px;height:36px;padding-bottom:2px;">0.000000</div>
<div class="c" style="left:1113px;top:192px;width:100px;height:36px;padding-bottom:2px;">0.000000</div>
<div class="c" style="left:1214px;top:192px;width:136px;height:36px;padding-bottom:2px;">2026-03-16 09:35:07</div>
<div class="c" style="left:1351px;top:192px;width:136px;height:36px;padding-bottom:2px;">无</div>
<div class="c" style="left:1488px;top:192px;width:137px;height:36px;padding-bottom:2px;">无</div>
<div class="a" style="left:0;top:229px;width:1700px;height:38px;background:#fff;border-top:0px"></div>
<div class="a" style="left:0;top:228px;width:1700px;height:1px;background:#f0f0f0"></div>
<div class="a" style="left:0px;top:229px;width:1px;height:38px;background:#f0f0f0"></div>
<div class="a" style="left:36px;top:229px;width:1px;height:38px;background:#f0f0f0"></div>
<div class="a" style="left:67px;top:229px;width:1px;height:38px;background:#f0f0f0"></div>
<div class="a" style="left:136px;top:229px;width:1px;height:38px;background:#f0f0f0"></div>
<div class="a" style="left:192px;top:229px;width:1px;height:38px;background:#f0f0f0"></div>
<div class="a" style="left:286px;top:229px;width:1px;height:38px;background:#f0f0f0"></div>
<div class="a" style="left:329px;top:229px;width:1px;height:38px;background:#f0f0f0"></div>
<div class="a" style="left:398px;top:229px;width:1px;height:38px;background:#f0f0f0"></div>
<div class="a" style="left:441px;top:229px;width:1px;height:38px;background:#f0f0f0"></div>
<div class="a" style="left:512px;top:229px;width:1px;height:38px;background:#f0f0f0"></div>
<div class="a" style="left:612px;top:229px;width:1px;height:38px;background:#f0f0f0"></div>
<div class="a" style="left:712px;top:229px;width:1px;height:38px;background:#f0f0f0"></div>
<div class="a" style="left:783px;top:229px;width:1px;height:38px;background:#f0f0f0"></div>
<div class="a" style="left:826px;top:229px;width:1px;height:38px;background:#f0f0f0"></div>
<div class="a" style="left:927px;top:229px;width:1px;height:38px;background:#f0f0f0"></div>
<div class="a" style="left:1012px;top:229px;width:1px;height:38px;background:#f0f0f0"></div>
<div class="a" style="left:1112px;top:229px;width:1px;height:38px;background:#f0f0f0"></div>
<div class="a" style="left:1213px;top:229px;width:1px;height:38px;background:#f0f0f0"></div>
<div class="a" style="left:1350px;top:229px;width:1px;height:38px;background:#f0f0f0"></div>
<div class="a" style="left:1487px;top:229px;width:1px;height:38px;background:#f0f0f0"></div>
<div class="a" style="left:1625px;top:229px;width:1px;height:38px;background:#f0f0f0"></div>
<div class="a" style="left:12px;top:238px;width:13px;height:13px;border:1px solid #767676;border-radius:2.5px;background:#fff"></div>
<div class="c" style="left:37px;top:229px;width:30px;height:37px;padding-bottom:2px;">35</div>
<div class="c" style="left:68px;top:229px;width:68px;height:37px;padding-bottom:2px;">-</div>
<div class="c" style="left:137px;top:229px;width:55px;height:37px;padding-bottom:2px;">3731</div>
<div class="c" style="left:193px;top:229px;width:93px;height:37px;padding-bottom:2px;">用户1987689</div>
<div class="c" style="left:287px;top:229px;width:42px;height:37px;padding-bottom:2px;">1</div>
<div class="c" style="left:330px;top:229px;width:68px;height:37px;padding-bottom:2px;">btcusdt</div>
<div class="c" style="left:399px;top:229px;width:42px;height:37px;padding-bottom:2px;">做多</div>
<div class="c" style="left:442px;top:229px;width:70px;height:37px;padding-bottom:2px;"><span style="display:inline-block;width:11px;height:11px;border-radius:50%;background:#18bc9c;margin-right:4px;vertical-align:-1px"></span><span style="color:#18bc9c">持仓中</span></div>
<div class="c" style="left:513px;top:229px;width:99px;height:37px;padding-bottom:2px;">72559.540000</div>
<div class="c" style="left:613px;top:229px;width:99px;height:37px;padding-bottom:2px;">0.000000</div>
<div class="c" style="left:713px;top:229px;width:70px;height:37px;padding-bottom:2px;">0.1000</div>
<div class="c" style="left:784px;top:229px;width:42px;height:37px;padding-bottom:2px;">20</div>
<div class="c" style="left:827px;top:229px;width:100px;height:37px;padding-bottom:2px;">362.797700</div>
<div class="c" style="left:928px;top:229px;width:84px;height:37px;padding-bottom:2px;">6.530359</div>
<div class="c" style="left:1013px;top:229px;width:99px;height:37px;padding-bottom:2px;">0.000000</div>
<div class="c" style="left:1113px;top:229px;width:100px;height:37px;padding-bottom:2px;">0.000000</div>
<div class="c" style="left:1214px;top:229px;width:136px;height:37px;padding-bottom:2px;">2026-03-16 09:34:48</div>
<div class="c" style="left:1351px;top:229px;width:136px;height:37px;padding-bottom:2px;">无</div>
<div class="c" style="left:1488px;top:229px;width:137px;height:37px;padding-bottom:2px;">无</div>
<div class="a" style="left:0;top:267px;width:1700px;height:37px;background:#f9f9f9;border-top:0px"></div>
<div class="a" style="left:0;top:266px;width:1700px;height:1px;background:#f0f0f0"></div>
<div class="a" style="left:0px;top:267px;width:1px;height:37px;background:#f0f0f0"></div>
<div class="a" style="left:36px;top:267px;width:1px;height:37px;background:#f0f0f0"></div>
<div class="a" style="left:67px;top:267px;width:1px;height:37px;background:#f0f0f0"></div>
<div class="a" style="left:136px;top:267px;width:1px;height:37px;background:#f0f0f0"></div>
<div class="a" style="left:192px;top:267px;width:1px;height:37px;background:#f0f0f0"></div>
<div class="a" style="left:286px;top:267px;width:1px;height:37px;background:#f0f0f0"></div>
<div class="a" style="left:329px;top:267px;width:1px;height:37px;background:#f0f0f0"></div>
<div class="a" style="left:398px;top:267px;width:1px;height:37px;background:#f0f0f0"></div>
<div class="a" style="left:441px;top:267px;width:1px;height:37px;background:#f0f0f0"></div>
<div class="a" style="left:512px;top:267px;width:1px;height:37px;background:#f0f0f0"></div>
<div class="a" style="left:612px;top:267px;width:1px;height:37px;background:#f0f0f0"></div>
<div class="a" style="left:712px;top:267px;width:1px;height:37px;background:#f0f0f0"></div>
<div class="a" style="left:783px;top:267px;width:1px;height:37px;background:#f0f0f0"></div>
<div class="a" style="left:826px;top:267px;width:1px;height:37px;background:#f0f0f0"></div>
<div class="a" style="left:927px;top:267px;width:1px;height:37px;background:#f0f0f0"></div>
<div class="a" style="left:1012px;top:267px;width:1px;height:37px;background:#f0f0f0"></div>
<div class="a" style="left:1112px;top:267px;width:1px;height:37px;background:#f0f0f0"></div>
<div class="a" style="left:1213px;top:267px;width:1px;height:37px;background:#f0f0f0"></div>
<div class="a" style="left:1350px;top:267px;width:1px;height:37px;background:#f0f0f0"></div>
<div class="a" style="left:1487px;top:267px;width:1px;height:37px;background:#f0f0f0"></div>
<div class="a" style="left:1625px;top:267px;width:1px;height:37px;background:#f0f0f0"></div>
<div class="a" style="left:12px;top:276px;width:13px;height:13px;border:1px solid #767676;border-radius:2.5px;background:#fff"></div>
<div class="c" style="left:37px;top:267px;width:30px;height:36px;padding-bottom:2px;">34</div>
<div class="c" style="left:68px;top:267px;width:68px;height:36px;padding-bottom:2px;">-</div>
<div class="c" style="left:137px;top:267px;width:55px;height:36px;padding-bottom:2px;">3729</div>
<div class="c" style="left:193px;top:267px;width:93px;height:36px;padding-bottom:2px;">测试2</div>
<div class="c" style="left:287px;top:267px;width:42px;height:36px;padding-bottom:2px;">1</div>
<div class="c" style="left:330px;top:267px;width:68px;height:36px;padding-bottom:2px;">btcusdt</div>
<div class="c" style="left:399px;top:267px;width:42px;height:36px;padding-bottom:2px;">做多</div>
<div class="c" style="left:442px;top:267px;width:70px;height:36px;padding-bottom:2px;"><span style="display:inline-block;width:11px;height:11px;border-radius:50%;background:#e74c3c;margin-right:4px;vertical-align:-1px"></span><span style="color:#e74c3c">已平仓</span></div>
<div class="c" style="left:513px;top:267px;width:99px;height:36px;padding-bottom:2px;">16918.370000</div>
<div class="c" style="left:613px;top:267px;width:99px;height:36px;padding-bottom:2px;">16943.960000</div>
<div class="c" style="left:713px;top:267px;width:70px;height:36px;padding-bottom:2px;">5.0000</div>
<div class="c" style="left:784px;top:267px;width:42px;height:36px;padding-bottom:2px;">10</div>
<div class="c" style="left:827px;top:267px;width:100px;height:36px;padding-bottom:2px;">8459.185000</div>
<div class="c" style="left:928px;top:267px;width:84px;height:36px;padding-bottom:2px;">152.265330</div>
<div class="c" style="left:1013px;top:267px;width:99px;height:36px;padding-bottom:2px;">16930.000000</div>
<div class="c" style="left:1113px;top:267px;width:100px;height:36px;padding-bottom:2px;">16900.000000</div>
<div class="c" style="left:1214px;top:267px;width:136px;height:36px;padding-bottom:2px;">2022-11-15 16:58:11</div>
<div class="c" style="left:1351px;top:267px;width:136px;height:36px;padding-bottom:2px;">2022-11-15 17:02:34</div>
<div class="c" style="left:1488px;top:267px;width:137px;height:36px;padding-bottom:2px;">2022-11-15 17:09:50</div>
<div class="a" style="left:0;top:304px;width:1700px;height:38px;background:#fff;border-top:0px"></div>
<div class="a" style="left:0;top:303px;width:1700px;height:1px;background:#f0f0f0"></div>
<div class="a" style="left:0px;top:304px;width:1px;height:38px;background:#f0f0f0"></div>
<div class="a" style="left:36px;top:304px;width:1px;height:38px;background:#f0f0f0"></div>
<div class="a" style="left:67px;top:304px;width:1px;height:38px;background:#f0f0f0"></div>
<div class="a" style="left:136px;top:304px;width:1px;height:38px;background:#f0f0f0"></div>
<div class="a" style="left:192px;top:304px;width:1px;height:38px;background:#f0f0f0"></div>
<div class="a" style="left:286px;top:304px;width:1px;height:38px;background:#f0f0f0"></div>
<div class="a" style="left:329px;top:304px;width:1px;height:38px;background:#f0f0f0"></div>
<div class="a" style="left:398px;top:304px;width:1px;height:38px;background:#f0f0f0"></div>
<div class="a" style="left:441px;top:304px;width:1px;height:38px;background:#f0f0f0"></div>
<div class="a" style="left:512px;top:304px;width:1px;height:38px;background:#f0f0f0"></div>
<div class="a" style="left:612px;top:304px;width:1px;height:38px;background:#f0f0f0"></div>
<div class="a" style="left:712px;top:304px;width:1px;height:38px;background:#f0f0f0"></div>
<div class="a" style="left:783px;top:304px;width:1px;height:38px;background:#f0f0f0"></div>
<div class="a" style="left:826px;top:304px;width:1px;height:38px;background:#f0f0f0"></div>
<div class="a" style="left:927px;top:304px;width:1px;height:38px;background:#f0f0f0"></div>
<div class="a" style="left:1012px;top:304px;width:1px;height:38px;background:#f0f0f0"></div>
<div class="a" style="left:1112px;top:304px;width:1px;height:38px;background:#f0f0f0"></div>
<div class="a" style="left:1213px;top:304px;width:1px;height:38px;background:#f0f0f0"></div>
<div class="a" style="left:1350px;top:304px;width:1px;height:38px;background:#f0f0f0"></div>
<div class="a" style="left:1487px;top:304px;width:1px;height:38px;background:#f0f0f0"></div>
<div class="a" style="left:1625px;top:304px;width:1px;height:38px;background:#f0f0f0"></div>
<div class="a" style="left:12px;top:313px;width:13px;height:13px;border:1px solid #767676;border-radius:2.5px;background:#fff"></div>
<div class="c" style="left:37px;top:304px;width:30px;height:37px;padding-bottom:2px;">33</div>
<div class="c" style="left:68px;top:304px;width:68px;height:37px;padding-bottom:2px;">-</div>
<div class="c" style="left:137px;top:304px;width:55px;height:37px;padding-bottom:2px;">3729</div>
<div class="c" style="left:193px;top:304px;width:93px;height:37px;padding-bottom:2px;">测试2</div>
<div class="c" style="left:287px;top:304px;width:42px;height:37px;padding-bottom:2px;">1</div>
<div class="c" style="left:330px;top:304px;width:68px;height:37px;padding-bottom:2px;">btcusdt</div>
<div class="c" style="left:399px;top:304px;width:42px;height:37px;padding-bottom:2px;">做多</div>
<div class="c" style="left:442px;top:304px;width:70px;height:37px;padding-bottom:2px;"><span style="display:inline-block;width:11px;height:11px;border-radius:50%;background:#e74c3c;margin-right:4px;vertical-align:-1px"></span><span style="color:#e74c3c">已平仓</span></div>
<div class="c" style="left:513px;top:304px;width:99px;height:37px;padding-bottom:2px;">16921.460000</div>
<div class="c" style="left:613px;top:304px;width:99px;height:37px;padding-bottom:2px;">16926.310000</div>
<div class="c" style="left:713px;top:304px;width:70px;height:37px;padding-bottom:2px;">5.0000</div>
<div class="c" style="left:784px;top:304px;width:42px;height:37px;padding-bottom:2px;">5</div>
<div class="c" style="left:827px;top:304px;width:100px;height:37px;padding-bottom:2px;">16921.460000</div>
<div class="c" style="left:928px;top:304px;width:84px;height:37px;padding-bottom:2px;">304.586280</div>
<div class="c" style="left:1013px;top:304px;width:99px;height:37px;padding-bottom:2px;">0.000000</div>
<div class="c" style="left:1113px;top:304px;width:100px;height:37px;padding-bottom:2px;">0.000000</div>
<div class="c" style="left:1214px;top:304px;width:136px;height:37px;padding-bottom:2px;">2022-11-15 16:57:52</div>
<div class="c" style="left:1351px;top:304px;width:136px;height:37px;padding-bottom:2px;">无</div>
<div class="c" style="left:1488px;top:304px;width:137px;height:37px;padding-bottom:2px;">2022-11-15 17:06:30</div>
<div class="a" style="left:0;top:342px;width:1700px;height:37px;background:#f9f9f9;border-top:0px"></div>
<div class="a" style="left:0;top:341px;width:1700px;height:1px;background:#f0f0f0"></div>
<div class="a" style="left:0px;top:342px;width:1px;height:37px;background:#f0f0f0"></div>
<div class="a" style="left:36px;top:342px;width:1px;height:37px;background:#f0f0f0"></div>
<div class="a" style="left:67px;top:342px;width:1px;height:37px;background:#f0f0f0"></div>
<div class="a" style="left:136px;top:342px;width:1px;height:37px;background:#f0f0f0"></div>
<div class="a" style="left:192px;top:342px;width:1px;height:37px;background:#f0f0f0"></div>
<div class="a" style="left:286px;top:342px;width:1px;height:37px;background:#f0f0f0"></div>
<div class="a" style="left:329px;top:342px;width:1px;height:37px;background:#f0f0f0"></div>
<div class="a" style="left:398px;top:342px;width:1px;height:37px;background:#f0f0f0"></div>
<div class="a" style="left:441px;top:342px;width:1px;height:37px;background:#f0f0f0"></div>
<div class="a" style="left:512px;top:342px;width:1px;height:37px;background:#f0f0f0"></div>
<div class="a" style="left:612px;top:342px;width:1px;height:37px;background:#f0f0f0"></div>
<div class="a" style="left:712px;top:342px;width:1px;height:37px;background:#f0f0f0"></div>
<div class="a" style="left:783px;top:342px;width:1px;height:37px;background:#f0f0f0"></div>
<div class="a" style="left:826px;top:342px;width:1px;height:37px;background:#f0f0f0"></div>
<div class="a" style="left:927px;top:342px;width:1px;height:37px;background:#f0f0f0"></div>
<div class="a" style="left:1012px;top:342px;width:1px;height:37px;background:#f0f0f0"></div>
<div class="a" style="left:1112px;top:342px;width:1px;height:37px;background:#f0f0f0"></div>
<div class="a" style="left:1213px;top:342px;width:1px;height:37px;background:#f0f0f0"></div>
<div class="a" style="left:1350px;top:342px;width:1px;height:37px;background:#f0f0f0"></div>
<div class="a" style="left:1487px;top:342px;width:1px;height:37px;background:#f0f0f0"></div>
<div class="a" style="left:1625px;top:342px;width:1px;height:37px;background:#f0f0f0"></div>
<div class="a" style="left:12px;top:351px;width:13px;height:13px;border:1px solid #767676;border-radius:2.5px;background:#fff"></div>
<div class="c" style="left:37px;top:342px;width:30px;height:36px;padding-bottom:2px;">32</div>
<div class="c" style="left:68px;top:342px;width:68px;height:36px;padding-bottom:2px;">-</div>
<div class="c" style="left:137px;top:342px;width:55px;height:36px;padding-bottom:2px;">3729</div>
<div class="c" style="left:193px;top:342px;width:93px;height:36px;padding-bottom:2px;">测试2</div>
<div class="c" style="left:287px;top:342px;width:42px;height:36px;padding-bottom:2px;">1</div>
<div class="c" style="left:330px;top:342px;width:68px;height:36px;padding-bottom:2px;">btcusdt</div>
<div class="c" style="left:399px;top:342px;width:42px;height:36px;padding-bottom:2px;">做多</div>
<div class="c" style="left:442px;top:342px;width:70px;height:36px;padding-bottom:2px;"><span style="display:inline-block;width:11px;height:11px;border-radius:50%;background:#e74c3c;margin-right:4px;vertical-align:-1px"></span><span style="color:#e74c3c">已平仓</span></div>
<div class="c" style="left:513px;top:342px;width:99px;height:36px;padding-bottom:2px;">16842.870000</div>
<div class="c" style="left:613px;top:342px;width:99px;height:36px;padding-bottom:2px;">16842.000000</div>
<div class="c" style="left:713px;top:342px;width:70px;height:36px;padding-bottom:2px;">5.0000</div>
<div class="c" style="left:784px;top:342px;width:42px;height:36px;padding-bottom:2px;">5</div>
<div class="c" style="left:827px;top:342px;width:100px;height:36px;padding-bottom:2px;">16842.870000</div>
<div class="c" style="left:928px;top:342px;width:84px;height:36px;padding-bottom:2px;">303.171660</div>
<div class="c" style="left:1013px;top:342px;width:99px;height:36px;padding-bottom:2px;">16860.000000</div>
<div class="c" style="left:1113px;top:342px;width:100px;height:36px;padding-bottom:2px;">16842.000000</div>
<div class="c" style="left:1214px;top:342px;width:136px;height:36px;padding-bottom:2px;">2022-11-15 15:56:33</div>
<div class="c" style="left:1351px;top:342px;width:136px;height:36px;padding-bottom:2px;">2022-11-15 15:56:56</div>
<div class="c" style="left:1488px;top:342px;width:137px;height:36px;padding-bottom:2px;">2022-11-15 15:58:51</div>
<div class="a" style="left:0;top:379px;width:1700px;height:38px;background:#fff;border-top:0px"></div>
<div class="a" style="left:0;top:378px;width:1700px;height:1px;background:#f0f0f0"></div>
<div class="a" style="left:0px;top:379px;width:1px;height:38px;background:#f0f0f0"></div>
<div class="a" style="left:36px;top:379px;width:1px;height:38px;background:#f0f0f0"></div>
<div class="a" style="left:67px;top:379px;width:1px;height:38px;background:#f0f0f0"></div>
<div class="a" style="left:136px;top:379px;width:1px;height:38px;background:#f0f0f0"></div>
<div class="a" style="left:192px;top:379px;width:1px;height:38px;background:#f0f0f0"></div>
<div class="a" style="left:286px;top:379px;width:1px;height:38px;background:#f0f0f0"></div>
<div class="a" style="left:329px;top:379px;width:1px;height:38px;background:#f0f0f0"></div>
<div class="a" style="left:398px;top:379px;width:1px;height:38px;background:#f0f0f0"></div>
<div class="a" style="left:441px;top:379px;width:1px;height:38px;background:#f0f0f0"></div>
<div class="a" style="left:512px;top:379px;width:1px;height:38px;background:#f0f0f0"></div>
<div class="a" style="left:612px;top:379px;width:1px;height:38px;background:#f0f0f0"></div>
<div class="a" style="left:712px;top:379px;width:1px;height:38px;background:#f0f0f0"></div>
<div class="a" style="left:783px;top:379px;width:1px;height:38px;background:#f0f0f0"></div>
<div class="a" style="left:826px;top:379px;width:1px;height:38px;background:#f0f0f0"></div>
<div class="a" style="left:927px;top:379px;width:1px;height:38px;background:#f0f0f0"></div>
<div class="a" style="left:1012px;top:379px;width:1px;height:38px;background:#f0f0f0"></div>
<div class="a" style="left:1112px;top:379px;width:1px;height:38px;background:#f0f0f0"></div>
<div class="a" style="left:1213px;top:379px;width:1px;height:38px;background:#f0f0f0"></div>
<div class="a" style="left:1350px;top:379px;width:1px;height:38px;background:#f0f0f0"></div>
<div class="a" style="left:1487px;top:379px;width:1px;height:38px;background:#f0f0f0"></div>
<div class="a" style="left:1625px;top:379px;width:1px;height:38px;background:#f0f0f0"></div>
<div class="a" style="left:12px;top:388px;width:13px;height:13px;border:1px solid #767676;border-radius:2.5px;background:#fff"></div>
<div class="c" style="left:37px;top:379px;width:30px;height:37px;padding-bottom:2px;">31</div>
<div class="c" style="left:68px;top:379px;width:68px;height:37px;padding-bottom:2px;">-</div>
<div class="c" style="left:137px;top:379px;width:55px;height:37px;padding-bottom:2px;">3729</div>
<div class="c" style="left:193px;top:379px;width:93px;height:37px;padding-bottom:2px;">测试2</div>
<div class="c" style="left:287px;top:379px;width:42px;height:37px;padding-bottom:2px;">1</div>
<div class="c" style="left:330px;top:379px;width:68px;height:37px;padding-bottom:2px;">btcusdt</div>
<div class="c" style="left:399px;top:379px;width:42px;height:37px;padding-bottom:2px;color:#18bc9c">做空</div>
<div class="c" style="left:442px;top:379px;width:70px;height:37px;padding-bottom:2px;"><span style="display:inline-block;width:11px;height:11px;border-radius:50%;background:#e74c3c;margin-right:4px;vertical-align:-1px"></span><span style="color:#e74c3c">已平仓</span></div>
<div class="c" style="left:513px;top:379px;width:99px;height:37px;padding-bottom:2px;">16799.690000</div>
<div class="c" style="left:613px;top:379px;width:99px;height:37px;padding-bottom:2px;">72587.940000</div>
<div class="c" style="left:713px;top:379px;width:70px;height:37px;padding-bottom:2px;">5.0000</div>
<div class="c" style="left:784px;top:379px;width:42px;height:37px;padding-bottom:2px;">5</div>
<div class="c" style="left:827px;top:379px;width:100px;height:37px;padding-bottom:2px;">16799.690000</div>
<div class="c" style="left:928px;top:379px;width:84px;height:37px;padding-bottom:2px;">302.394420</div>
<div class="c" style="left:1013px;top:379px;width:99px;height:37px;padding-bottom:2px;">0.000000</div>
<div class="c" style="left:1113px;top:379px;width:100px;height:37px;padding-bottom:2px;">0.000000</div>
<div class="c" style="left:1214px;top:379px;width:136px;height:37px;padding-bottom:2px;">2022-11-15 15:32:24</div>
<div class="c" style="left:1351px;top:379px;width:136px;height:37px;padding-bottom:2px;">无</div>
<div class="c" style="left:1488px;top:379px;width:137px;height:37px;padding-bottom:2px;">2026-03-16 08:23:33</div>
<div class="a" style="left:0;top:416px;width:1630px;height:1px;background:#f0f0f0"></div>
<div class="a" style="left:0;top:417px;width:1630px;height:15px;background:#fafafa"></div>
</div>
<svg class="a" style="left:264px;top:608px" width="6" height="9" viewBox="0 0 6 9"><path d="M6 0v9L0 4.5z" fill="#a3a3a3"/></svg>
<svg class="a" style="left:1879px;top:608px" width="6" height="9" viewBox="0 0 6 9"><path d="M0 0v9l6-4.5z" fill="#8a8a8a"/></svg>
<div class="a" style="left:278px;top:608px;width:1449px;height:9px;border-radius:5px;background:#898989"></div>
<div class="a" style="left:260px;top:638px;line-height:16px">显示第 1 到第 10 条记录，总共 40 条记录 每页显示</div>
<div class="a" style="left:560px;top:632px;width:51px;height:31px;border:1px solid #ddd;background:#f4f4f4;border-radius:3px"></div>
<div class="a" style="left:574px;top:639px;line-height:16px">10</div>
<svg style="position:absolute;left:591px;top:645px" width="8" height="5" viewBox="0 0 10 6" fill="#333"><path d="M0 6h10L5 0z"/></svg>
<div class="a" style="left:615px;top:638px;line-height:16px">条记录</div>
<div class="c" style="left:1522px;top:630px;width:65px;height:32px;padding-bottom:2px;background:#fafafa;border:1px solid #ddd;border-radius:3px 0 0 3px;color:#666">上一页</div>
<div class="c" style="left:1586px;top:630px;width:33px;height:32px;padding-bottom:2px;background:#2c3e50;color:#fff;z-index:2">1</div>
<div class="c" style="left:1619px;top:630px;width:33px;height:32px;padding-bottom:2px;background:#fafafa;border:1px solid #ddd;color:#666">2</div>
<div class="c" style="left:1651px;top:630px;width:33px;height:32px;padding-bottom:2px;background:#fafafa;border:1px solid #ddd;color:#666">3</div>
<div class="c" style="left:1683px;top:630px;width:33px;height:32px;padding-bottom:2px;background:#fafafa;border:1px solid #ddd;color:#666">4</div>
<div class="c" style="left:1715px;top:630px;width:65px;height:32px;padding-bottom:2px;background:#fafafa;border:1px solid #ddd;border-radius:0 3px 3px 0;color:#666">下一页</div>
<div class="a" style="left:1785px;top:630px;width:50px;height:31px;border:1px solid #d2d6de;background:#fff"></div>
<div class="c" style="left:1840px;top:630px;width:50px;height:31px;border:1px solid #ddd;background:#f4f4f4;border-radius:3px;padding-bottom:2px;color:#444">跳转</div>
<svg class="a" style="left:0;top:0;z-index:10" width="1917" height="916" viewBox="0 0 1917 916" fill="#f00"><circle cx="958.5" cy="458" r="139.5" fill="none" stroke="#f00" stroke-width="5"/><text x="0" y="0" text-anchor="middle" font-family="Liberation Sans" font-weight="bold" font-size="25" stroke="#f00" stroke-width="0.9" transform="rotate(258 958.5 458) translate(958.5 353) scale(0.74 1)">w</text><text x="0" y="0" text-anchor="middle" font-family="Liberation Sans" font-weight="bold" font-size="25" stroke="#f00" stroke-width="0.9" transform="rotate(274 958.5 458) translate(958.5 353) scale(0.74 1)">w</text><text x="0" y="0" text-anchor="middle" font-family="Liberation Sans" font-weight="bold" font-size="25" stroke="#f00" stroke-width="0.9" transform="rotate(290 958.5 458) translate(958.5 353) scale(0.74 1)">w</text><text x="958.5" y="353" text-anchor="middle" font-family="Liberation Sans" font-weight="bold" font-size="22" transform="rotate(305 958.5 458)">.</text><text x="958.5" y="351" text-anchor="middle" font-family="Liberation Sans" font-size="27" stroke="#f00" stroke-width="0.7" transform="rotate(322 958.5 458)">5</text><text x="958.5" y="351" text-anchor="middle" font-family="Liberation Sans" font-size="27" stroke="#f00" stroke-width="0.7" transform="rotate(338 958.5 458)">1</text><text x="958.5" y="351" text-anchor="middle" font-family="Liberation Sans" font-size="27" stroke="#f00" stroke-width="0.7" transform="rotate(354 958.5 458)">5</text><text x="958.5" y="351" text-anchor="middle" font-family="Liberation Sans" font-size="27" stroke="#f00" stroke-width="0.7" transform="rotate(370 958.5 458)">y</text><text x="0" y="0" text-anchor="middle" font-family="Liberation Sans" font-weight="bold" font-size="25" stroke="#f00" stroke-width="0.9" transform="rotate(386 958.5 458) translate(958.5 353) scale(0.74 1)">m</text><text x="958.5" y="353" text-anchor="middle" font-family="Liberation Sans" font-weight="bold" font-size="22" transform="rotate(401 958.5 458)">.</text><text x="958.5" y="353" text-anchor="middle" font-family="Liberation Sans" font-size="24" stroke="#f00" stroke-width="0.6" transform="rotate(419 958.5 458)">c</text><text x="958.5" y="353" text-anchor="middle" font-family="Liberation Sans" font-size="24" stroke="#f00" stroke-width="0.6" transform="rotate(435 958.5 458)">o</text><text x="0" y="0" text-anchor="middle" font-family="Liberation Sans" font-weight="bold" font-size="25" stroke="#f00" stroke-width="0.9" transform="rotate(450 958.5 458) translate(958.5 353) scale(0.74 1)">m</text><text x="885" y="470.5" font-family="Liberation Sans" font-weight="bold" font-size="36" letter-spacing="2.3">515</text><text x="956" y="472.5" font-family="Liberation Serif" font-weight="bold" font-size="37" letter-spacing="1.5" transform="translate(956 472) skewX(-8) translate(-956 -472)">源码</text><text x="0" y="0" text-anchor="middle" font-family="Liberation Sans" font-weight="bold" font-size="29" transform="translate(891.5 538.7) scale(1 1)">5</text><text x="0" y="0" text-anchor="middle" font-family="Liberation Sans" font-weight="bold" font-size="29" transform="translate(908 538.7) scale(1 1)">1</text><text x="0" y="0" text-anchor="middle" font-family="Liberation Sans" font-weight="bold" font-size="29" transform="translate(925.2 538.7) scale(1 1)">5</text><text x="0" y="0" text-anchor="middle" font-family="Liberation Sans" font-weight="bold" font-size="29" transform="translate(942.8 538.7) scale(1 1)">y</text><text x="0" y="0" text-anchor="middle" font-family="Liberation Sans" font-weight="bold" font-size="29" transform="translate(960.7 538.7) scale(0.76 1)">m</text><text x="0" y="0" text-anchor="middle" font-family="Liberation Sans" font-weight="bold" font-size="29" transform="translate(973.2 538.7) scale(1 1)">.</text><text x="0" y="0" text-anchor="middle" font-family="Liberation Sans" font-weight="bold" font-size="29" transform="translate(993.5 538.7) scale(1 1)">c</text><text x="0" y="0" text-anchor="middle" font-family="Liberation Sans" font-weight="bold" font-size="29" transform="translate(1010.4 538.7) scale(1 1)">o</text><text x="0" y="0" text-anchor="middle" font-family="Liberation Sans" font-weight="bold" font-size="29" transform="translate(1027.5 538.7) scale(0.74 1)">m</text><text x="958.5" y="589" text-anchor="middle" font-family="Liberation Sans" font-style="italic" font-size="12" transform="rotate(27.5 958.5 458)">5</text><text x="958.5" y="589" text-anchor="middle" font-family="Liberation Sans" font-style="italic" font-size="12" transform="rotate(20.700000000000003 958.5 458)">1</text><text x="958.5" y="589" text-anchor="middle" font-family="Liberation Sans" font-style="italic" font-size="12" transform="rotate(14 958.5 458)">5</text><text x="958.5" y="589" text-anchor="middle" font-family="Liberation Sans" font-style="italic" font-size="12" transform="rotate(7 958.5 458)">y</text><text x="958.5" y="589" text-anchor="middle" font-family="Liberation Sans" font-style="italic" font-size="12" transform="rotate(0.7000000000000028 958.5 458)">m</text><text x="958.5" y="589" text-anchor="middle" font-family="Liberation Sans" font-style="italic" font-size="12" transform="rotate(-5 958.5 458)">.</text><text x="958.5" y="589" text-anchor="middle" font-family="Liberation Sans" font-style="italic" font-size="12" transform="rotate(-12.299999999999997 958.5 458)">c</text><text x="958.5" y="589" text-anchor="middle" font-family="Liberation Sans" font-style="italic" font-size="12" transform="rotate(-18.700000000000003 958.5 458)">o</text><text x="958.5" y="589" text-anchor="middle" font-family="Liberation Sans" font-style="italic" font-size="12" transform="rotate(-25.5 958.5 458)">m</text></svg>
</body></html>
